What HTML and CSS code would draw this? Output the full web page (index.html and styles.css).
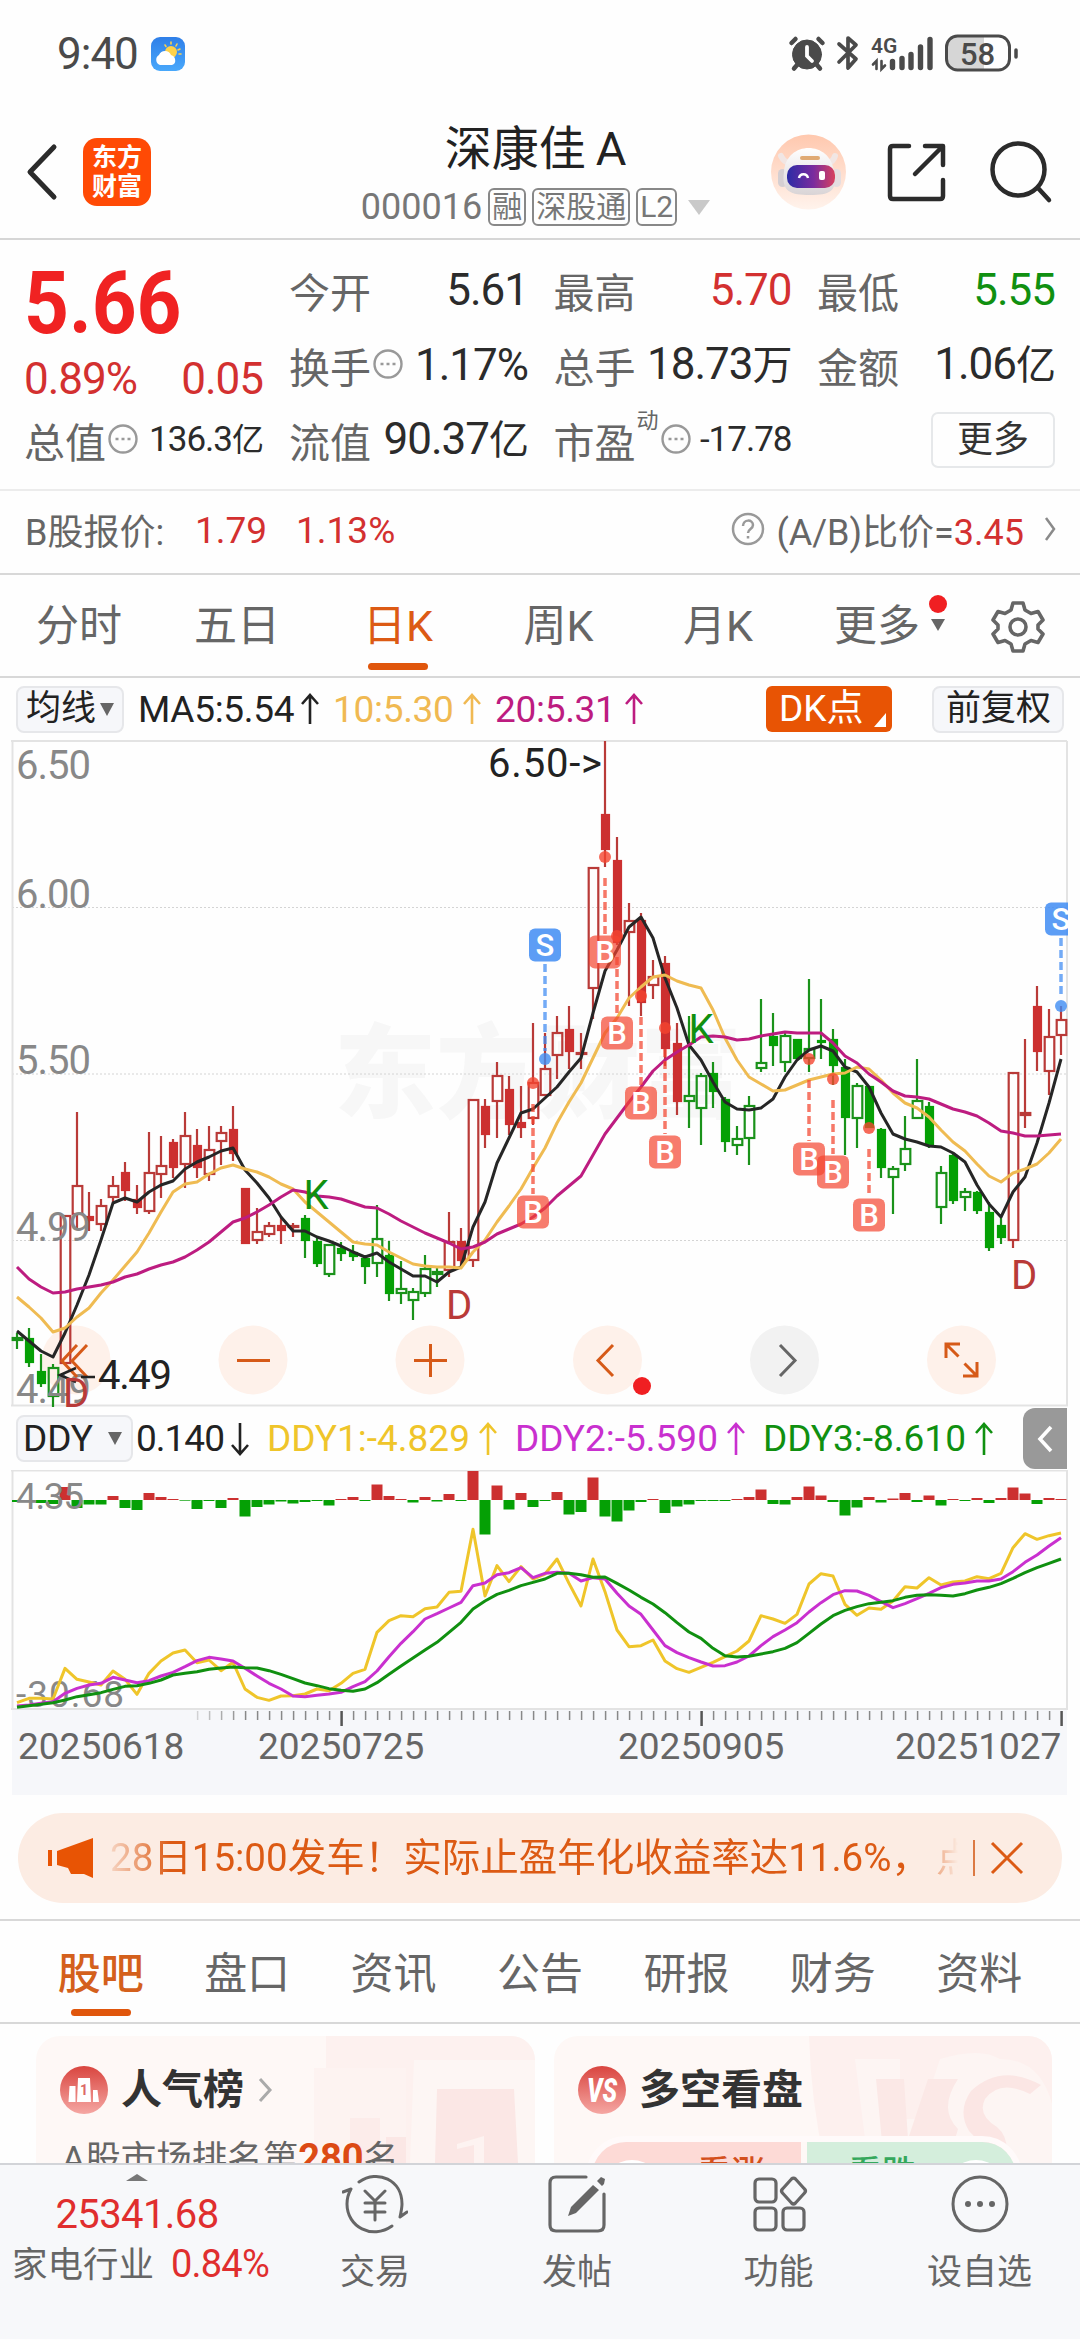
FILE: index.html
```html
<!DOCTYPE html>
<html lang="zh-CN">
<head>
<meta charset="utf-8">
<title>深康佳A 000016</title>
<link rel="stylesheet" href="styles.css">
</head>
<body>
<div class="screen">
  <header class="status">
    <span class="clock">9:40</span>
    <svg class="weather" width="34" height="34" viewBox="0 0 34 34"><defs><linearGradient id="sky" x1="0" y1="0" x2="0" y2="1"><stop offset="0" stop-color="#2f7fe8"/><stop offset="1" stop-color="#49a8fb"/></linearGradient></defs><rect width="34" height="34" rx="9" fill="url(#sky)"/><g stroke="#fbd04c" stroke-width="1.6" stroke-linecap="round"><path d="M20 5v2M26 7l-1 2M29 12l-2 1M30 17h-2M14 8l1 1.500"/></g><circle cx="20" cy="15" r="6" fill="#ffd24a"/><path d="M9 28a5.500 5.500 0 0 1-1-10 6.500 6.500 0 0 1 12 0c5 1 6 9 1 10z" fill="#fff"/></svg>
    <span class="spacer"></span>
    <svg class="sys" width="230" height="40" viewBox="788 34 230 40">
      <g fill="#4a4a4a" stroke="#4a4a4a" stroke-linecap="round">
        <circle cx="807" cy="54.500" r="14.500"/>
        <path d="M791.500 43l4-4M818.500 39l4 4M797 65l-3 3.500M817 65l3 3.500" stroke-width="4.500" fill="none"/>
        <path d="M807 47v9l5 5" stroke="#fff" stroke-width="3.800" fill="none"/>
        <path d="M839 44l17 15-8 9V38l8 7-17 17" stroke-width="3.700" fill="none" stroke-linejoin="round"/>
        <path d="M892.500 61.500v6M902 58.500v9M911 54.500v13M920.500 47v20.500M930 39.500v28" stroke-width="5.400" fill="none"/>
        <path d="M876.500 69v-8l-3.500 3.500M881.500 61v8l3.500-3.500" stroke-width="2.600" fill="none"/>
      </g>
      <text x="871" y="53" class="net">4G</text>
      <path d="M957 37h27v32h-27a9 9 0 0 1-9-9V46a9 9 0 0 1 9-9z" fill="#d6d6d6"/>
      <rect x="946.500" y="36" width="63" height="34" rx="11" fill="none" stroke="#4a4a4a" stroke-width="3"/>
      <path d="M1016 50v7" stroke="#4a4a4a" stroke-width="3.500" stroke-linecap="round"/>
      <text x="977.500" y="64.500" class="batt" text-anchor="middle">58</text>
    </svg>
  </header>

  <nav class="navbar">
    <svg class="back" width="34" height="60" viewBox="0 0 34 60"><path d="M28 5L4 30l24 25" fill="none" stroke="#2b2b2b" stroke-width="5" stroke-linejoin="round" stroke-linecap="round"/></svg>
    <div class="logo"><span>东方</span><span>财富</span></div>
    <div class="title">
      <h1>深康佳<i>A</i></h1>
      <div class="code"><span class="num">000016</span><b>融</b><b>深股通</b><b>L2</b><svg width="22" height="15" viewBox="0 0 22 15"><path d="M0 0h22L11 15z" fill="#c9c9c9"/></svg></div>
    </div>
    <svg class="actions" width="296" height="80" viewBox="768 132 296 80">
      <defs>
        <linearGradient id="peach" x1="0" y1="0" x2="0" y2="1"><stop offset="0" stop-color="#ffc8ae"/><stop offset="1" stop-color="#fff3ec"/></linearGradient>
        <linearGradient id="visor" x1="0" y1="0" x2="1" y2="0"><stop offset="0" stop-color="#2c2ca6"/><stop offset=".55" stop-color="#7a2b9e"/><stop offset="1" stop-color="#d8405e"/></linearGradient>
        <linearGradient id="shell" x1="0" y1="0" x2="0" y2="1"><stop offset="0" stop-color="#fff"/><stop offset="1" stop-color="#d9d4d6"/></linearGradient>
      </defs>
      <circle cx="808.500" cy="172" r="37.500" fill="url(#peach)"/>
      <path d="M781 156q3 6 8 7M835 156q-2 6-7 7" fill="none" stroke="#f1e6e4" stroke-width="6" stroke-linecap="round"/>
      <rect x="778" y="169" width="9" height="18" rx="4.500" fill="#d5cfd2"/><rect x="832" y="169" width="9" height="18" rx="4.500" fill="#e4dde0"/>
      <path d="M784 172c2-32 47-32 50 0 4 20-5 23-24 23s-29-3-26-23z" fill="url(#shell)"/>
      <rect x="800" y="156" width="20" height="4" rx="2" fill="#e0aa74"/>
      <rect x="787" y="165" width="48" height="23" rx="10" fill="url(#visor)"/>
      <path d="M799 178c1-5 8-5 9 0" fill="none" stroke="#fff" stroke-width="2.500"/><rect x="819" y="171" width="6" height="9" rx="2" fill="#fff"/>
      <g fill="none" stroke="#2b2b2b" stroke-width="4.500" stroke-linecap="round" stroke-linejoin="round">
        <path d="M909 146h-16q-3 0-3 3v47q0 3 3 3h47q3 0 3-3v-16M925 146h18v19M942 147l-27 27"/>
        <circle cx="1018.500" cy="169.500" r="26"/><path d="M1038 188l11 12"/>
      </g>
    </svg>
  </nav>

  <section class="quote">
    <div class="main">
      <div class="last"><span>5.66</span></div>
      <div class="change num"><span>0.89%</span><span>0.05</span></div>
      <div class="cell small"><label>总值<svg class="dots" viewBox="0 0 30 30"><circle cx="15" cy="15" r="13.500"/><path d="M7.500 15h3M13.500 15h3M19.500 15h3"/></svg></label><em>136.3<u>亿</u></em></div>
    </div>
    <div class="stats">
      <div class="cell"><label>今开</label><em>5.61</em></div>
      <div class="cell"><label>最高</label><em class="up">5.70</em></div>
      <div class="cell"><label>最低</label><em class="down">5.55</em></div>
      <div class="cell"><label>换手<svg class="dots" viewBox="0 0 30 30"><circle cx="15" cy="15" r="13.500"/><path d="M7.500 15h3M13.500 15h3M19.500 15h3"/></svg></label><em>1.17%</em></div>
      <div class="cell"><label>总手</label><em>18.73<u>万</u></em></div>
      <div class="cell"><label>金额</label><em>1.06<u>亿</u></em></div>
      <div class="cell"><label>流值</label><em>90.37<u>亿</u></em></div>
      <div class="cell small"><label>市盈<sup>动</sup><svg class="dots" viewBox="0 0 30 30"><circle cx="15" cy="15" r="13.500"/><path d="M7.500 15h3M13.500 15h3M19.500 15h3"/></svg></label><em>-17.78</em></div>
      <div class="cell end"><button class="more">更多</button></div>
    </div>
  </section>

  <section class="bshare">
    <span class="lbl">B股报价:</span><span class="red a">1.79</span><span class="red b">1.13%</span>
    <span class="spacer"></span>
    <svg width="34" height="34" viewBox="0 0 34 34"><circle cx="17" cy="17" r="15" fill="none" stroke="#999" stroke-width="2.500"/><path d="M12 14c0-7 10-7 10-1 0 4-5 4-5 8M17 24v2.500" fill="none" stroke="#999" stroke-width="2.500"/></svg>
    <span class="ratio">(A/B)比价=<i>3.45</i></span>
    <svg class="chev" width="12" height="24" viewBox="0 0 12 24"><path d="M2 1l8 11L2 23" fill="none" stroke="#8a8a8a" stroke-width="2.500"/></svg>
  </section>

  <nav class="periods">
    <span>分时</span><span>五日</span><span class="on">日K</span><span>周K</span><span>月K</span>
    <span class="morep">更多<svg width="20" height="40" viewBox="0 0 20 40"><circle cx="10" cy="9" r="9" fill="#f01f22"/><path d="M3 24h14l-7 12z" fill="#666"/></svg></span>
    <svg class="gear" width="54" height="54" viewBox="-27 -27 54 54"><path d="M-5-24h10l2 7 6 3.500 7-2 5 8.500-5 5v4l5 5-5 8.500-7-2L7 17l-2 7H-5l-2-7-6-3.500-7 2-5-8.500 5-5v-4l-5-5 5-8.500 7 2L-7-17z" fill="none" stroke="#666" stroke-width="3.600" stroke-linejoin="round"/><circle r="8" fill="none" stroke="#666" stroke-width="3.600"/></svg>
  </nav>

  <div class="legend ma">
    <button class="pill">均线<svg width="14" height="13" viewBox="0 0 14 13"><path d="M0 0h14L7 13z" fill="#666"/></svg></button>
    <span class="k1">MA5:5.54</span><svg class="arr k1" viewBox="0 0 20 32"><path d="M10 31V2M2 11l8-9 8 9"/></svg>
    <span class="k2">10:5.30</span><svg class="arr k2" viewBox="0 0 20 32"><path d="M10 31V2M2 11l8-9 8 9"/></svg>
    <span class="k3">20:5.31</span><svg class="arr k3" viewBox="0 0 20 32"><path d="M10 31V2M2 11l8-9 8 9"/></svg>
    <span class="spacer"></span>
    <button class="dk">DK点<svg width="12" height="14" viewBox="0 0 12 14"><path d="M12 0v14H0z" fill="#fff"/></svg></button>
    <button class="pill adj">前复权</button>
  </div>

  <svg class="kline" id="kline" width="1060" height="667" viewBox="11 740 1060 667">
    <defs><clipPath id="plot"><rect x="11" y="740" width="1057" height="667"/></clipPath></defs>
    <text x="334" y="1110" class="mark" textLength="408">东方财富</text>
    <g class="grid"><path d="M12 907.500H1067M12 1074H1067M12 1240.500H1067" stroke-dasharray="2 2"/></g>
    <g class="frame"><path d="M12.500 741v664M11 741h1056M1067 741v664M11 1405.500h1057"/></g>
    <g class="tools">
      <circle cx="76" cy="1360" r="34.500"/><circle cx="253" cy="1360" r="34.500"/><circle cx="430" cy="1360" r="34.500"/><circle cx="607.500" cy="1360" r="34.500"/><circle cx="784.500" cy="1360" r="34.500" class="off"/><circle cx="961.500" cy="1360" r="34.500"/>
    </g>
    <g id="candles"></g>
    <g id="averages"></g>
    <g class="scale">
      <text x="16" y="779">6.50</text><text x="16" y="908">6.00</text><text x="16" y="1074">5.50</text><text x="16" y="1241">4.99</text><text x="16" y="1403">4.49</text>
    </g>
    <g class="toolicons">
      <path d="M77 1345l-15 16 15 16M87 1345l-15 16 15 16M237 1360.500h33M414 1360.500h33M430.500 1344v33M613 1345l-15 15.500 15 15.500M946 1358v-14h14M946.500 1344.500l12 12M977 1362v14h-14M976.500 1375.500l-12-12"/>
      <path d="M780 1345l15 15.500-15 15.500" class="off"/>
    </g>
    <circle cx="642" cy="1386" r="9" fill="#f01f22"/>
    <g class="note"><text x="488" y="777" textLength="114">6.50-&gt;</text><text x="98" y="1389" textLength="74">4.49</text><path d="M76 1368l-16 7 16 7M81 1377h14"/></g>
    <g id="signals" clip-path="url(#plot)"></g>
  </svg>

  <div class="legend ddy">
    <button class="pill">DDY<svg width="14" height="13" viewBox="0 0 14 13"><path d="M0 0h14L7 13z" fill="#666"/></svg></button>
    <span class="k1">0.140</span><svg class="arr k1" viewBox="0 0 20 34"><path d="M10 1v31M2 23l8 9 8-9"/></svg>
    <span class="d1">DDY1:-4.829</span><svg class="arr d1" viewBox="0 0 20 34"><path d="M10 33V2M2 11l8-9 8 9"/></svg>
    <span class="d2">DDY2:-5.590</span><svg class="arr d2" viewBox="0 0 20 34"><path d="M10 33V2M2 11l8-9 8 9"/></svg>
    <span class="d3">DDY3:-8.610</span><svg class="arr d3" viewBox="0 0 20 34"><path d="M10 33V2M2 11l8-9 8 9"/></svg>
    <span class="spacer"></span>
    <div class="fold"><svg width="18" height="30" viewBox="0 0 18 30"><path d="M15 3L4 15l11 12" fill="none" stroke="#fff" stroke-width="3.600"/></svg></div>
  </div>

  <svg class="ddyplot" width="1060" height="240" viewBox="11 1470 1060 240">
    <g class="frame"><path d="M12.500 1470v239M11 1470.500h1056M1067 1470v239M11 1709h1057"/></g>
    <g id="bars"></g>
    <g class="scale sub"><text x="16" y="1509" textLength="68">4.35</text><text x="16" y="1707" textLength="108">-30.68</text></g>
    <g id="ddylines"></g>
  </svg>

  <div class="axis">
    <svg id="ticks" width="1060" height="18" viewBox="11 1710 1060 18"></svg>
    <div class="dates"><span>20250618</span><span>20250725</span><span>20250905</span><span>20251027</span></div>
  </div>

  <section class="banner">
    <svg width="48" height="40" viewBox="0 0 48 40"><path d="M0 12h4v16H0zM9 13L45 0v40l-9-4H23l-3-6-11-3z" fill="#e85404"/></svg>
    <p>28日15:00发车！实际止盈年化收益率达11.6%，<i>点</i></p>
    <span class="bar"></span>
    <svg class="close" width="34" height="34" viewBox="0 0 34 34"><path d="M2 2l30 30M32 2L2 32" stroke="#dc5a14" stroke-width="3" fill="none"/></svg>
  </section>

  <nav class="sections"><span class="on">股吧</span><span>盘口</span><span>资讯</span><span>公告</span><span>研报</span><span>财务</span><span>资料</span></nav>

  <section class="cards">
    <article class="card">
      <svg class="deco" width="499" height="127" viewBox="36 2037 499 127"><path d="M326 2037h210v127H314v-95h12z" fill="#fdf1ef"/><path d="M314 2069h92v95h-92z" fill="#fdf3f1"/><path d="M350 2119h30v45h-30z" fill="#fcecea"/><path d="M414 2061h122l4 103H410z" fill="#fdf6f4"/><path d="M437 2090h77l4 74h-83z" fill="#fbe7e5"/><path d="M457 2145l27-8v27h-10v-18l-17 4z" fill="#fdf3f1"/><path d="M386 2138h20v26h-20z" fill="#fbe7e5"/></svg>
      <div class="head"><svg width="48" height="48" viewBox="0 0 48 48"><defs><linearGradient id="rose" x1="0" y1="0" x2="0" y2="1"><stop offset="0" stop-color="#d9453f"/><stop offset="1" stop-color="#f5a7a3"/></linearGradient></defs><circle cx="24" cy="24" r="24" fill="url(#rose)"/><path d="M9.500 20h6v16h-7zM18 12h12l1 24H17zM33 24h4.500l1.500 12h-6z" fill="#fff"/><text x="24" y="29" class="one" text-anchor="middle">1</text></svg><h2>人气榜</h2><svg class="go" width="16" height="26" viewBox="0 0 16 26"><path d="M3 2l10 11L3 24" fill="none" stroke="#aaa" stroke-width="3"/></svg></div>
      <p class="rank">A股市场排名第<b>280</b>名</p>
    </article>
    <article class="card">
      <svg class="deco" width="498" height="127" viewBox="554 2037 498 127"><path d="M809 2037h243v127H825q-14-60-16-127z" fill="#fdf0ee"/><path d="M855 2060h45v60h20l20-60q40-12 60 0 40 0 52 45v59H868z" fill="#fdf5f3"/><path d="M876 2080h28l4 60 20-60h30q-20 30 0 50l-10 34h-64z" fill="#fbe8e6"/><path d="M1030 2095q-30-15-45 5-8 16 12 28 14 12 8 36h-30q10-18-6-32-12-20 2-40 30-28 70-6z" fill="#fbe6e4"/></svg>
      <div class="head"><svg width="48" height="48" viewBox="0 0 48 48"><circle cx="24" cy="24" r="24" fill="url(#rose)"/><text x="24" y="36" class="vs" text-anchor="middle" textLength="30" lengthAdjust="spacingAndGlyphs">VS</text></svg><h2>多空看盘</h2></div>
      <div class="vote"><span class="bull"><i></i>看涨</span><span class="bear">看跌<i></i></span></div>
    </article>
  </section>

  <footer class="dock">
    <div class="index">
      <svg width="22" height="7" viewBox="0 0 22 7"><path d="M11 0l11 7H0z" fill="#777"/></svg>
      <span class="v">25341.68</span>
      <span class="n">家电行业<b>0.84%</b></span>
    </div>
    <div class="tab"><svg viewBox="0 0 66 60"><g fill="none" stroke="#666" stroke-width="3" stroke-linecap="round" stroke-linejoin="round"><path d="M17 8C36-5 60 6 60 30q0 4-2 13l7-5M50 52C30 66 5 53 5 30q0-8 4-15L1 18M23 17l10 10 10-10M33 27v19M23 29h20M23 38h20"/></g></svg><span>交易</span></div>
    <div class="tab"><svg viewBox="0 0 66 60"><g fill="none" stroke="#666" stroke-width="3.200" stroke-linecap="round" stroke-linejoin="round"><path d="M42 3H12q-6 0-6 6v42q0 6 6 6h42q6 0 6-6V20"/></g><path d="M49 11l6 5-23 23-8 3 3-9zM53 7l4-4 4 2-1 5-2 2z" fill="#666"/></svg><span>发帖</span></div>
    <div class="tab"><svg viewBox="0 0 66 60"><g fill="none" stroke="#666" stroke-width="3.200" stroke-linejoin="round"><rect x="9" y="5" width="21" height="23" rx="4"/><rect x="9" y="34" width="21" height="22" rx="4"/><rect x="37" y="34" width="21" height="22" rx="4"/><path d="M45.500 5q2-2 4 0l9 10q2 2 0 4l-9 10q-2 2-4 0l-9-10q-2-2 0-4z"/></g></svg><span>功能</span></div>
    <div class="tab"><svg viewBox="0 0 66 60"><circle cx="33" cy="30" r="27" fill="none" stroke="#666" stroke-width="3"/><g fill="#666"><circle cx="21" cy="30" r="3"/><circle cx="33" cy="30" r="3"/><circle cx="45" cy="30" r="3"/></g></svg><span>设自选</span></div>
  </footer>
</div>
<script src="chart.js"></script>
</body>
</html>
```

FILE: styles.css
```css
* { box-sizing: border-box; margin: 0; padding: 0; }
body {
  width: 1080px;
  background: #fff;
  color: #2b2b2b;
  font-family: Roboto, "Noto Sans CJK SC", sans-serif;
}
i, em, u { font-style: normal; text-decoration: none; }
button { font: inherit; border: 0; background: none; }
svg { display: block; flex: none; }
svg text { font-family: Roboto, "Noto Sans CJK SC", sans-serif; }
.screen { width: 1080px; height: 2340px; overflow: hidden; display: flex; flex-direction: column; background: #fefefe; }
.screen > * { flex: none; }
.spacer { flex: 1; }

/* status bar */
.status { height: 110px; padding: 0 62px 2px 57px; display: flex; align-items: center; }
.clock { font-size: 44px; letter-spacing: -1px; color: #4a4a4a; width: 94px; }
.net { font-size: 21px; font-weight: 600; fill: #4a4a4a; }
.batt { font-size: 31px; font-weight: 500; fill: #4a4a4a; }

/* title bar */
.navbar { height: 130px; border-bottom: 2px solid #d6d6d6; display: flex; align-items: center; padding: 0 16px 4px 26px; }
.logo { margin-left: 23px; width: 68px; height: 68px; border-radius: 14px; background: #ff4a05; color: #fff; display: flex; flex-direction: column; align-items: center; justify-content: center; font-size: 25px; line-height: 29px; font-weight: 700; }
.title { flex: 1; display: flex; flex-direction: column; align-items: center; padding: 4px 0 0 152px; white-space: nowrap; }
h1 { font-size: 47px; font-weight: 400; line-height: 64px; color: #222; margin-top: 2px; }
h1 i { margin-left: 10px; }
.code { display: flex; align-items: center; gap: 6px; height: 52px; font-size: 36px; color: #777; }
.code .num { letter-spacing: 0; }
.code b { font-weight: 400; font-size: 30px; line-height: 34px; height: 38px; border: 2px solid #888; border-radius: 6px; padding: 0 2px; }
.code svg { margin-left: 5px; }

/* quote block */
.quote { height: 251px; border-bottom: 2px solid #ececec; padding-top: 12px; display: flex; }
.main { width: 289px; padding-left: 24px; padding-right: 26px; }
.last { height: 102px; line-height: 102px; font-size: 88px; font-weight: 700; color: #f02222; }
.last span { display: inline-block; transform: scaleX(.89); transform-origin: 0 50%; }
.change { height: 50px; line-height: 50px; display: flex; justify-content: space-between; font-size: 44px; letter-spacing: -1px; color: #d33030; }
.main .cell { height: 71px; }
.stats { width: 766px; display: grid; grid-template-columns: 239px 238px 238px; column-gap: 25.500px; grid-auto-rows: 75px; }
.cell { height: 75px; display: flex; justify-content: space-between; align-items: center; white-space: nowrap; }
.cell label { font-size: 41px; color: #666; display: flex; align-items: center; }
.cell em { font-size: 44px; letter-spacing: -1px; line-height: 60px; }
.cell u { font-size: 40px; }
.cell.small em { font-size: 35px; }
.cell.small u { font-size: 32px; }
.cell.end { justify-content: flex-end; }
.cell sup { font-size: 22px; line-height: 22px; align-self: flex-start; margin-top: 0; margin-left: 1px; }
.dots { width: 30px; height: 30px; margin: -2px 0 0 2px; fill: none; stroke: #999; stroke-width: 2.400; }
.up { color: #d33030; }
.down { color: #109010; }
.more { width: 124px; height: 56px; border: 2px solid #e6e8ea; border-radius: 7px; font-size: 36px; line-height: 50px; color: #333; }

/* B-share strip */
.bshare { height: 84px; border-bottom: 2px solid #d8d8d8; padding: 0 24px 6px 25px; display: flex; align-items: center; font-size: 36px; color: #666; white-space: nowrap; }
.bshare .lbl { width: 170px; }
.red { color: #d33030; padding-top: 3px; font-size: 37px; }
.bshare .a { width: 101px; }
.ratio { margin-left: 11px; letter-spacing: 0; }
.ratio i { color: #d33030; }
.bshare .chev { margin-left: 20px; }

/* period tabs */
.periods { height: 103px; border-bottom: 2px solid #d8d8d8; display: grid; grid-template-columns: 158px 158px 164px 157px 162px 146px auto; align-items: center; font-size: 43px; line-height: 103px; color: #666; }
.periods > span { text-align: center; position: relative; }
.periods .on { color: #dc5a14; }
.on::after { content: ""; position: absolute; left: 50%; bottom: 8px; width: 60px; height: 7px; margin-left: -30px; border-radius: 4px; background: #e0560c; }
.morep { padding-left: 10px; }
.morep svg { position: absolute; left: 129px; top: 20px; }
.gear { margin-left: 46px; }

/* indicator legends */
.legend { display: flex; align-items: center; font-size: 37px; white-space: nowrap; }
.legend > span { flex: none; }
.legend > .spacer { flex: 1; }
.pill { height: 47px; display: flex; align-items: center; background: #f6f7fa; border: 2px solid #e6e7ea; border-radius: 8px; font-size: 35px; line-height: 40px; color: #222; }
.arr { width: 20px; height: 32px; fill: none; stroke: currentColor; stroke-width: 2.600; }
.ma { height: 62px; padding: 0 16px; }
.ma .pill { width: 108px; padding-left: 8px; gap: 4px; }
.ma .adj { width: 132px; padding-left: 12px; margin-left: 40px; }
.k1 { color: #222; } .k2 { color: #f0b952; } .k3 { color: #bd1c80; }
.ma span.k1 { margin-left: 14px; width: 163px; letter-spacing: -.3px; }
.ma span.k2 { margin-left: 12px; width: 130px; letter-spacing: -.3px; }
.ma span.k3 { margin-left: 12px; width: 130px; letter-spacing: -.3px; }
.ma .arr { margin-left: -1px; margin-right: 1px; }
.dk { width: 126px; height: 46px; border-radius: 6px; background: #e85404; color: #fff; font-size: 37px; line-height: 42px; display: flex; align-items: center; padding: 0 0 0 13px; position: relative; }
.dk svg { position: absolute; right: 6px; bottom: 5px; }
.ddy { height: 63px; padding-left: 16px; padding-right: 13px; }
.ddy .pill { width: 117px; padding-left: 5px; gap: 15px; font-size: 37px; }
.ddy > span.k1 { margin-left: 3px; width: 94px; letter-spacing: -1px; }
.ddy > .arr { height: 34px; }
.d1 { color: #efc52a; } .d2 { color: #c930cf; } .d3 { color: #109010; }
.ddy > span.d1, .ddy > span.d2, .ddy > span.d3 { margin-left: 17px; width: 211px; letter-spacing: 0; }
.fold { width: 44px; height: 61px; background: #999; border-radius: 12px 0 0 12px; display: flex; align-items: center; justify-content: center; }

/* charts */
.kline, .ddyplot { margin-left: 11px; }
.mark { font-size: 102px; font-weight: 900; fill: #f7f7f7; }
.grid { fill: none; stroke: #d4d4d4; stroke-width: 1; }
.frame { fill: none; stroke: #e3e3e3; stroke-width: 2; }
.tools circle { fill: #fef1ea; }
.tools .off { fill: #f2f2f2; }
.toolicons { fill: none; stroke: #d65a18; stroke-width: 3; }
.toolicons .off { stroke: #666; }
.scale { font-size: 40px; letter-spacing: -1px; fill: #888; }
.sub { font-size: 37px; letter-spacing: 0; }
.note { font-size: 40px; fill: #222; }
.note path { fill: none; stroke: #222; stroke-width: 2.500; }
.rise { stroke: #b93a38; stroke-width: 2.200; fill: none; }
.rise.solid rect { fill: #cc3030; stroke: #cc3030; }
.fall { stroke: #1a921a; stroke-width: 2.200; fill: none; }
.fall.solid rect { fill: #05a005; stroke: #05a005; }
.line { fill: none; stroke-width: 3; stroke-linejoin: round; }
.dkletter { font-size: 40px; }
.tagletter { font-size: 31px; font-weight: 500; fill: #fff; }

/* time axis */
.axis { width: 1055px; height: 85px; margin-left: 12px; background: #f6f7fa; }
.axis svg { margin-left: -1px; }
.dates { display: grid; grid-template-columns: 240px 360px 277px 165px; padding-left: 6px; font-size: 37px; line-height: 37px; color: #666; letter-spacing: 0; }

/* promo banner */
.banner { height: 90px; margin: 18px 18px 16px; padding: 0 38px 0 30px; border-radius: 45px; background: #fcece3; display: flex; align-items: center; color: #dc5a14; }
.banner p { margin-left: 14px; width: 850px; overflow: hidden; white-space: nowrap; font-size: 38.500px; line-height: 60px; -webkit-mask-image: linear-gradient(90deg, rgba(0,0,0,.15), #000 60px, #000 800px, transparent 848px); mask-image: linear-gradient(90deg, rgba(0,0,0,.15), #000 60px, #000 800px, transparent 848px); }
.banner p i { margin-left: 6px; }
.banner .bar { width: 2px; height: 36px; background: #dc7a44; margin-left: 13px; }
.banner .close { margin-left: 15px; }

/* section tabs */
.sections { height: 105px; border-top: 2px solid #d8d8d8; border-bottom: 2px solid #d8d8d8; padding: 0 27.500px; display: grid; grid-template-columns: repeat(7, 1fr); font-size: 43px; line-height: 106px; text-align: center; color: #666; }
.sections span { position: relative; }
.sections .on { color: #d4601c; font-weight: 500; }
.sections .on::after { bottom: 11px; }

/* cards */
.cards { height: 139px; padding: 12px 28px 0 36px; display: grid; grid-template-columns: 499px 498px; column-gap: 19px; overflow: hidden; }
.card { height: 220px; border-radius: 24px; background: #fef8f6; position: relative; overflow: hidden; }
.deco { position: absolute; left: 0; top: 0; }
.head { position: relative; display: flex; align-items: center; height: 108px; padding-left: 24px; }
h2 { font-size: 41px; line-height: 60px; font-weight: 700; color: #333; margin-left: 13px; }
.go { margin-left: 13px; }
.one { font-size: 14px; font-weight: 700; fill: #dc6a66; }
.vs { font-size: 33px; font-weight: 900; font-style: italic; fill: #fff; }
.rank { position: relative; padding-left: 26px; margin-top: -6px; font-size: 35.500px; line-height: 40px; color: #666; white-space: nowrap; }
.rank b { color: #dc4a14; font-size: 38px; }
.vote { position: relative; margin: -8px 30px 0 32px; height: 80px; border: 6px solid #fffafa; border-radius: 40px; display: flex; gap: 6px; font-size: 34px; line-height: 62px; font-weight: 500; overflow: hidden; }
.bull { flex: 1; background: #fddad6; color: #d4501c; display: flex; padding-left: 10px; }
.bear { flex: 1; background: #d4eedc; color: #35a85c; display: flex; justify-content: flex-end; padding-right: 10px; }
.vote i { width: 60px; height: 60px; border-radius: 50%; background: #fff; margin-top: 18px; }
.bull i { margin-right: 35px; }
.bear i { margin-left: 30px; }

/* bottom dock */
.dock { height: 176px; background: #f7f8fa; border-top: 2px solid #d2d4d8; display: grid; grid-template-columns: 274px 202px 202px 201px 201px; color: #666; }
.index { display: flex; flex-direction: column; align-items: center; padding-top: 9px; }
.index .v { font-size: 40px; line-height: 50px; margin-top: 9px; color: #e02e2e; letter-spacing: -.6px; }
.index .n { font-size: 35.500px; line-height: 48px; white-space: nowrap; align-self: flex-start; margin-left: 12px; }
.index b { font-weight: 400; color: #e02e2e; margin-left: 17px; font-size: 38px; letter-spacing: -.8px; }
.tab { display: flex; flex-direction: column; align-items: center; padding-top: 9px; font-size: 35px; }
.tab svg { width: 66px; height: 60px; }
.tab span { line-height: 50px; margin-top: 14px; }
```

FILE: chart.js
```js
const NS = 'http://www.w3.org/2000/svg';
const X0 = 17, STEP = 12;
const xAt = i => X0 + i * STEP;

function add(parent, tag, attrs, text) {
  const el = document.createElementNS(NS, tag);
  for (const k in attrs) el.setAttribute(k, attrs[k]);
  if (text) el.textContent = text;
  parent.appendChild(el);
  return el;
}
const $ = id => document.getElementById(id);

// Candle rows: colour+body (r/g = hollow, R/G = solid), high, body top, body bottom, low
const candles = `g 1333 1337 1341 1349|G 1328 1338 1363 1367|G 1354 1371 1384 1387|g 1364 1367 1397 1407|r 1215 1215 1364 1364|r 1112 1185 1215 1230|R 1192 1216 1221 1231|r 1199 1205 1225 1231|r 1176 1185 1198 1202|R 1162 1172 1191 1201|R 1185 1199 1208 1214|r 1132 1172 1212 1214|r 1136 1165 1175 1198|R 1139 1142 1168 1178|r 1112 1135 1165 1188|R 1129 1145 1168 1178|r 1126 1149 1175 1181|r 1126 1132 1142 1165|R 1106 1129 1154 1161|R 1188 1188 1244 1244|r 1208 1231 1241 1244|r 1222 1225 1235 1237|R 1217 1225 1231 1244|r 1223 1225 1228 1237|G 1215 1218 1241 1258|G 1238 1241 1264 1267|g 1244 1244 1275 1277|G 1242 1248 1254 1261|G 1245 1252 1257 1261|G 1255 1258 1267 1284|g 1205 1238 1264 1277|G 1241 1255 1294 1301|g 1261 1288 1294 1304|g 1288 1291 1301 1320|g 1255 1268 1294 1297|g 1268 1271 1275 1287|r 1212 1241 1271 1277|R 1228 1241 1261 1266|r 1099 1099 1261 1267|R 1099 1106 1135 1148|r 1062 1075 1102 1138|R 1076 1089 1125 1135|R 1086 1122 1128 1138|r 1023 1082 1119 1125|r 1033 1068 1096 1096|r 1016 1032 1056 1079|R 1006 1029 1052 1069|r 1033 1052 1055 1069|r 867 867 989 1019|R 741 814 850 867|R 837 860 943 945|r 903 920 933 1006|R 913 920 1003 1016|r 960 976 986 999|R 956 963 1049 1066|R 1023 1043 1102 1115|g 1016 1095 1102 1128|g 1073 1075 1109 1145|G 1062 1073 1092 1108|G 1097 1099 1142 1152|g 1126 1138 1146 1155|g 1096 1105 1139 1165|g 999 1062 1069 1072|G 1013 1036 1046 1066|g 1032 1035 1063 1072|G 1039 1039 1059 1059|g 979 1048 1059 1072|G 999 1040 1042 1059|G 1029 1039 1066 1085|G 1059 1067 1118 1155|g 1083 1085 1119 1148|G 1086 1086 1128 1128|G 1128 1129 1168 1178|g 1166 1168 1178 1214|g 1116 1148 1165 1171|g 1059 1100 1119 1119|G 1102 1106 1145 1148|g 1166 1172 1208 1224|G 1153 1155 1201 1204|g 1188 1191 1198 1211|G 1191 1192 1211 1214|G 1202 1212 1248 1251|G 1218 1225 1238 1244|r 1072 1072 1241 1248|r 1039 1112 1116 1128|R 986 1006 1052 1071|r 1009 1036 1072 1095|r 1006 1019 1036 1055`.split('|').map(s => s.split(' '));

const ma5 = [1331,1341,1351,1357,1333,1305,1275,1240,1203,1198,1202,1192,1185,1181,1169,1162,1157,1151,1148,1170,1183,1198,1217,1231,1231,1237,1241,1246,1252,1257,1253,1262,1269,1276,1276,1282,1272,1267,1227,1202,1163,1138,1113,1109,1098,1087,1072,1058,1013,971,950,927,917,938,978,1008,1045,1060,1082,1102,1109,1110,1108,1099,1077,1060,1050,1046,1051,1067,1072,1087,1113,1134,1139,1142,1146,1147,1153,1162,1185,1204,1217,1192,1177,1143,1103,1059];
const ma10 = [1297,1307,1318,1332,1328,1317,1308,1293,1280,1266,1252,1233,1212,1192,1184,1182,1174,1168,1165,1169,1172,1177,1184,1189,1202,1212,1222,1232,1242,1244,1245,1252,1258,1264,1266,1267,1267,1268,1252,1240,1222,1206,1189,1168,1148,1123,1102,1083,1058,1033,1018,998,987,977,975,981,985,988,1010,1038,1060,1077,1084,1091,1090,1085,1080,1077,1074,1073,1067,1069,1080,1093,1103,1108,1117,1130,1142,1151,1164,1176,1182,1173,1169,1164,1153,1139];
const ma20 = [1267,1279,1287,1293,1292,1289,1287,1285,1282,1277,1274,1269,1265,1262,1257,1250,1242,1232,1222,1218,1212,1205,1197,1190,1192,1196,1197,1199,1203,1207,1208,1214,1221,1227,1233,1238,1243,1249,1247,1242,1234,1229,1224,1217,1208,1196,1186,1176,1155,1134,1118,1102,1087,1071,1060,1052,1045,1037,1036,1037,1040,1039,1036,1034,1032,1033,1033,1033,1043,1056,1063,1074,1082,1091,1096,1097,1099,1104,1109,1112,1116,1123,1131,1133,1136,1136,1135,1134];

const line = (parent, ys, color) => add(parent, 'polyline', {
  class: 'line', stroke: color, points: ys.map((y, i) => xAt(i) + ',' + y).join(' ')
});

candles.forEach(([kind, ...v], i) => {
  const [hi, top, bot, lo] = v.map(Number), x = xAt(i) + .5;
  const solid = kind === kind.toUpperCase();
  const cls = (kind.toLowerCase() === 'r' ? 'rise' : 'fall') + (solid ? ' solid' : '');
  const g = add($('candles'), 'g', { class: cls });
  if (solid) add(g, 'path', { d: `M${x - .5} ${hi}V${lo}` });
  else add(g, 'path', { d: `M${x - .5} ${hi}V${top}M${x - .5} ${bot}V${lo}` });
  const w = solid ? 7 : 9.6;
  add(g, 'rect', { x: x - w / 2, y: top + 1, width: w, height: Math.max(bot - top - 2, 1) });
});
line($('averages'), ma5, '#262626');
line($('averages'), ma10, '#efbb52');
line($('averages'), ma20, '#bd1c80');

// Trade tags: letter, x, tag centre y, anchor dot y
const tags = [['B',533,1212,1083],['B',605,952,857],['B',617,1033,936],['B',641,1103,996],['B',665,1152,1028],['B',809,1159,1059],['B',833,1172,1079],['B',869,1215,1128],['S',545,945,1059],['S',1061,919,1006]];
const sig = $('signals');
for (const [t, x, y, dot] of tags) {
  const buy = t === 'B', c = buy ? '#f4452f' : '#3f8cf3';
  const from = buy ? dot + 21 : y + 19, to = buy ? y - 18 : dot - 8;
  add(sig, 'path', { d: `M${x} ${from}V${to}`, stroke: c, 'stroke-width': 3.5, 'stroke-dasharray': '8 4', opacity: .72 });
  add(sig, 'circle', { cx: x, cy: dot, r: 6, fill: c, opacity: .8 });
  add(sig, 'rect', { x: x - 16, y: y - 16.5, width: 32, height: 33, rx: 6, fill: c, opacity: buy ? .7 : .85 });
  add(sig, 'text', { x, y: y + 11, class: 'tagletter', 'text-anchor': 'middle' }, t);
}
[['K',701,1043,'#109010'],['K',316,1209,'#109010'],['D',459,1319,'#b93a38'],['D',1024,1289,'#b93a38'],['D',76,1407,'#b93a38']]
  .forEach(([t, x, y, fill]) => add(sig, 'text', { x, y, fill, class: 'dkletter', 'text-anchor': 'middle' }, t));

// Histogram values in pixels from the zero line
const hist = [-2,-1,-3,-4,13,-8,-4.5,-4.5,4,-8,-10,7,3,1,-.7,-9,-1,-8,2,-16.5,-7,-4.5,-1.5,-3.5,-2,-1,-5.5,1,3,-1,15.5,4,1,-2.5,3,-1.5,6,-1,29,-34.5,14.5,-9.5,7,-7,-1,8,-14.5,-12,22.5,-16.5,-21.5,-10.5,-2,1,-13,-6.5,-4.5,-1,-1,-1,1,3,10.5,-4,-4.5,3,13.5,4.5,-2,-15.5,-7.5,3,-2.5,1.5,7,-2,4.5,-5.5,1,-1,2,-3,2,12.5,6.5,-4,2,1];
hist.forEach((v, i) => add($('bars'), 'rect', {
  x: Math.max(xAt(i) - 5.5, 12), y: v > 0 ? 1500 - v : 1500, width: 11, height: Math.abs(v), fill: v > 0 ? '#cc3030' : '#05a005'
}));

// DDY series, three units per pixel, measured from y = 1400
const ddy1 = [908,895,895,897,805,838,846,855,813,838,883,820,783,759,750,788,780,812,787,867,892,901,888,887,882,867,872,850,820,808,697,662,647,650,626,621,577,574,388,588,497,545,500,537,522,477,550,618,477,575,690,740,737,720,783,806,817,802,787,770,753,723,647,657,670,643,552,521,528,613,646,624,628,603,560,564,533,555,546,543,530,536,520,443,401,418,407,399];
const ddy2 = [918,915,910,905,880,865,855,850,832,840,848,842,828,817,800,782,772,777,783,805,828,850,867,888,890,886,882,877,860,845,813,770,730,695,657,641,624,607,557,549,524,518,503,533,520,517,520,543,533,537,580,618,643,690,737,758,773,786,798,797,786,768,737,710,690,668,636,608,584,572,573,586,605,623,611,596,580,563,553,549,543,543,537,515,487,465,438,413];
const ddy3 = [922,917,913,908,900,890,884,878,868,859,857,850,840,825,820,815,808,804,801,803,804,812,823,836,849,857,866,871,874,867,848,823,798,774,750,727,697,667,627,603,583,571,557,547,537,520,520,524,532,531,550,570,592,612,638,668,696,715,745,767,771,769,762,755,745,728,700,672,647,631,620,611,607,602,592,586,584,586,588,581,570,562,551,535,518,503,490,477];
const px = a => a.map(v => 1400 + v / 3);
line($('ddylines'), px(ddy1), '#efc52a');
line($('ddylines'), px(ddy2), '#c930cf');
line($('ddylines'), px(ddy3), '#109010');

for (let i = 15; i < 88; i++) {
  const major = i % 30 === 27;
  add($('ticks'), 'path', {
    d: `M${xAt(i) + .6} 1711V${major ? 1726 : 1720}`,
    stroke: major ? '#555' : '#888', 'stroke-width': major ? 2.5 : 1.5,
    opacity: Math.min(1, (i - 13) / 6)
  });
}
```
